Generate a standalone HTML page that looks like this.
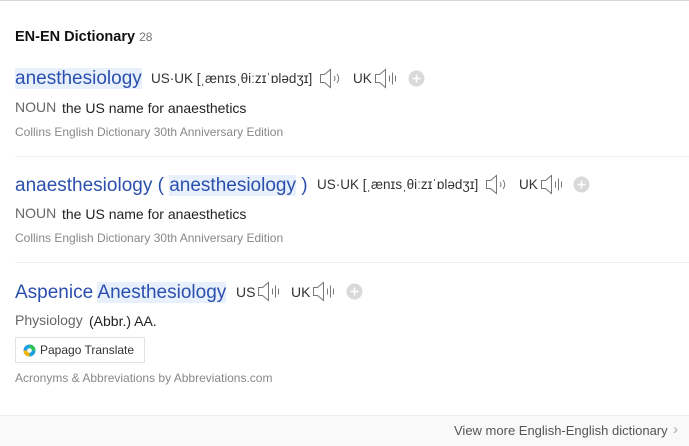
<!DOCTYPE html>
<html><head><meta charset="utf-8"><style>
*{margin:0;padding:0;box-sizing:border-box}
body{width:689px;height:446px;background:#fff;font-family:"Liberation Sans","DejaVu Sans",sans-serif;position:relative;overflow:hidden;color:#222}
.a{position:absolute;white-space:nowrap}
.hw{font-size:19px;color:#2b4fae}
.hl{background:#e8f1fb}
.ph{font-size:13.5px;color:#333}
.pos{font-size:14px;color:#666}
.def{font-size:14px;color:#222}
.src{font-size:12px;color:#888}
.sep{position:absolute;left:15px;right:0;height:1px;background:#ececec}
svg{position:absolute}
</style></head><body>
<div style="position:absolute;left:0;top:0;width:689px;height:1px;background:#d6d6d6"></div>
<div class="a" style="left:15px;top:29px;font-size:14.5px;font-weight:bold;color:#111">EN-EN Dictionary <span style="font-weight:normal;font-size:12px;color:#777">28</span></div>

<div class="a hw" style="left:15px;top:68px"><span class="hl">anesthesiology</span></div>
<div class="a ph" style="left:151px;top:71px">US·UK [ˌænɪsˌθiːzɪˈɒlədʒɪ]</div>
<svg style="left:319px;top:68px" width="24" height="21" viewBox="0 0 24 21" fill="none" stroke="#777" stroke-width="1"><path d="M1.5 6.5h4l6-5v18l-6-5h-4z"/><path d="M15 8q2 2.5 0 5M18 6q3.5 4.5 0 9"/></svg>
<div class="a ph" style="left:353px;top:71px">UK</div>
<svg style="left:374px;top:68px" width="24" height="21" viewBox="0 0 24 21" fill="none" stroke="#777" stroke-width="1"><path d="M1.5 6.5h4l6-5v18l-6-5h-4z"/><path d="M15.5 7.5v6M18.5 4.5v12M21.5 7.5v6"/></svg>
<svg style="left:408px;top:70px" width="17" height="17"><circle cx="8.5" cy="8.5" r="8" fill="#d9d9d9"/><path d="M8.5 4.5v8M4.5 8.5h8" stroke="#fff" stroke-width="1.5"/></svg>
<div class="a pos" style="left:15px;top:99px">NOUN</div>
<div class="a def" style="left:62px;top:100px">the US name for anaesthetics</div>
<div class="a src" style="left:15px;top:125px">Collins English Dictionary 30th Anniversary Edition</div>
<div class="sep" style="top:156px"></div>

<div class="a hw" style="left:15px;top:175px">anaesthesiology ( <span class="hl">anesthesiology</span> )</div>
<div class="a ph" style="left:317px;top:177px">US·UK [ˌænɪsˌθiːzɪˈɒlədʒɪ]</div>
<svg style="left:485px;top:174px" width="24" height="21" viewBox="0 0 24 21" fill="none" stroke="#777" stroke-width="1"><path d="M1.5 6.5h4l6-5v18l-6-5h-4z"/><path d="M15 8q2 2.5 0 5M18 6q3.5 4.5 0 9"/></svg>
<div class="a ph" style="left:519px;top:177px">UK</div>
<svg style="left:540px;top:174px" width="24" height="21" viewBox="0 0 24 21" fill="none" stroke="#777" stroke-width="1"><path d="M1.5 6.5h4l6-5v18l-6-5h-4z"/><path d="M15.5 7.5v6M18.5 4.5v12M21.5 7.5v6"/></svg>
<svg style="left:573px;top:176px" width="17" height="17"><circle cx="8.5" cy="8.5" r="8" fill="#d9d9d9"/><path d="M8.5 4.5v8M4.5 8.5h8" stroke="#fff" stroke-width="1.5"/></svg>
<div class="a pos" style="left:15px;top:205px">NOUN</div>
<div class="a def" style="left:62px;top:206px">the US name for anaesthetics</div>
<div class="a src" style="left:15px;top:231px">Collins English Dictionary 30th Anniversary Edition</div>
<div class="sep" style="top:262px"></div>

<div class="a hw" style="left:15px;top:282px">Aspenice <span class="hl">Anesthesiology</span></div>
<div class="a ph" style="left:236px;top:284px;font-size:14px">US</div>
<svg style="left:257px;top:281px" width="24" height="21" viewBox="0 0 24 21" fill="none" stroke="#777" stroke-width="1"><path d="M1.5 6.5h4l6-5v18l-6-5h-4z"/><path d="M15.5 7.5v6M18.5 4.5v12M21.5 7.5v6"/></svg>
<div class="a ph" style="left:291px;top:284px;font-size:14px">UK</div>
<svg style="left:312px;top:281px" width="24" height="21" viewBox="0 0 24 21" fill="none" stroke="#777" stroke-width="1"><path d="M1.5 6.5h4l6-5v18l-6-5h-4z"/><path d="M15.5 7.5v6M18.5 4.5v12M21.5 7.5v6"/></svg>
<svg style="left:346px;top:283px" width="17" height="17"><circle cx="8.5" cy="8.5" r="8" fill="#d9d9d9"/><path d="M8.5 4.5v8M4.5 8.5h8" stroke="#fff" stroke-width="1.5"/></svg>
<div class="a pos" style="left:15px;top:312px">Physiology</div>
<div class="a def" style="left:89px;top:313px">(Abbr.) AA.</div>
<div style="position:absolute;left:15px;top:337px;width:130px;height:26px;border:1px solid #e2e2e2;background:#fff"></div>
<svg style="left:23px;top:344px" width="13" height="13" viewBox="0 0 13 13"><circle cx="6.5" cy="6.5" r="6" fill="#1ea0e0"/><path d="M6.5 0.5a6 6 0 0 1 6 6h-6z" fill="#2ec25b"/><path d="M0.5 6.5a6 6 0 0 0 6 6v-6z" fill="#f5b400"/><circle cx="6.5" cy="6.5" r="2.3" fill="#fff"/></svg>
<div class="a" style="left:40px;top:343px;font-size:12px;color:#333">Papago Translate</div>
<div class="a src" style="left:15px;top:371px">Acronyms &amp; Abbreviations by Abbreviations.com</div>

<div style="position:absolute;left:0;top:415px;width:689px;height:31px;background:#f9f9f9;border-top:1px solid #ececec"></div>
<div class="a" style="left:454px;top:423px;font-size:13px;color:#555">View more English-English dictionary</div>
<div class="a" style="left:673px;top:421px;font-size:15px;color:#aaa">›</div>
</body></html>
